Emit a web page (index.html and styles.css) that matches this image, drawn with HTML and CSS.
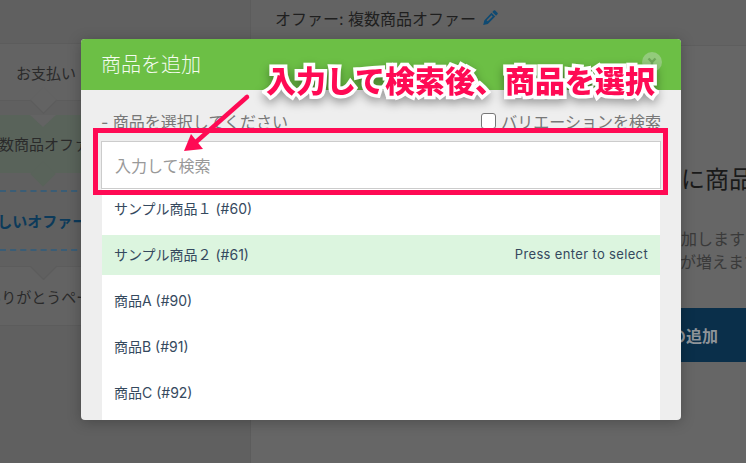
FILE: index.html
```html
<!DOCTYPE html>
<html lang="ja">
<head>
<meta charset="utf-8">
<title>商品を追加</title>
<link rel="stylesheet" href="styles.css">
</head>
<body>
<div class="page">
  <aside class="sidebar">
    <div class="step step-first"><span class="step-label">お支払い</span></div>
    <div class="step step-current"><span class="step-label step-label-wide">複数商品オファー</span></div>
    <div class="step-add"><span class="step-label step-label-wide">新しいオファー ＋</span></div>
    <div class="step step-last"><span class="step-label">ありがとうページ</span></div>
  </aside>
  <main class="main">
    <header class="topbar">
      <span>オファー: 複数商品オファー</span>
      <svg class="pencil" viewBox="0 0 14 14" aria-hidden="true"><path d="M10 .5a1 1 0 0 1 1.4 0l2.1 2.1a1 1 0 0 1 0 1.4l-1.3 1.3-3.5-3.5zM7.9 2.6l3.5 3.5-6.9 6.9-4.3 1 1-4.3zM8 5 3.4 9.6l1 1L9 6z" fill-rule="evenodd"/></svg>
    </header>
    <section class="content">
      <h2 class="content-title">こちらに商品を追加</h2>
      <p class="content-text content-text-first">オファーに商品を追加しますよ</p>
      <p class="content-text content-text-second">売上が増えます</p>
      <button class="add-button" type="button">商品の追加</button>
    </section>
  </main>

  <div class="modal">
    <div class="modal-head">
      <h1 class="modal-title">商品を追加</h1>
      <span class="modal-close"><svg viewBox="0 0 20 20" aria-hidden="true"><path d="M6.5 6.5 10 10l3.5-3.5M10 10v3.5"/></svg></span>
    </div>
    <div class="modal-body">
      <div class="modal-row">
        <span>- 商品を選択してください</span>
        <label class="variation"><span class="check"></span>バリエーションを検索</label>
      </div>
      <div class="search">入力して検索</div>
      <ul class="results">
        <li class="result">サンプル商品１ (#60)</li>
        <li class="result result-active"><span>サンプル商品２ (#61)</span><span class="hint">Press enter to select</span></li>
        <li class="result">商品A (#90)</li>
        <li class="result">商品B (#91)</li>
        <li class="result">商品C (#92)</li>
      </ul>
    </div>
  </div>

  <div class="callout-box"></div>
  <svg class="callout-arrow" viewBox="0 0 80 70" aria-hidden="true">
    <path class="arrow-line" d="M65 5 14 50"/>
    <path class="arrow-head" d="M2 59 9 42 21 57z"/>
  </svg>
  <div class="callout-text">入力して検索後、商品を選択</div>
</div>
</body>
</html>
```
FILE: styles.css
```css
* { box-sizing: border-box; }
html, body { margin: 0; height: 100%; }
body {
  font-family: Inter, "Noto Sans CJK JP", sans-serif;
  background: #666;
  overflow: hidden;
}
.page {
  position: relative;
  display: flex;
  width: 746px;
  height: 463px;
  overflow: hidden;
}

/* Sidebar */
.sidebar {
  width: 251px;
  flex: none;
  padding-top: 43px;
  background: #606060;
  border-right: 1px solid #5c5c5c;
  color: #2a2a2a;
  font-size: 15px;
}
.step-label {
  display: flex;
  justify-content: center;
  width: 92px;
  white-space: nowrap;
}
.step-label-wide { width: 88px; }
.step {
  position: relative;
  display: flex;
  align-items: center;
  height: 58px;
  background: #636363;
  border-top: 1px solid #5c5c5c;
  border-bottom: 1px solid #5c5c5c;
}
.step-first::after,
.step-current::after {
  content: "";
  position: absolute;
  left: 34px;
  width: 18px;
  height: 18px;
  bottom: -10px;
  transform: rotate(45deg);
  background: inherit;
  border-right: 1px solid #5c5c5c;
  border-bottom: 1px solid #5c5c5c;
}
.step-current {
  margin-top: 14px;
  padding-bottom: 2px;
  background: #59635a;
  border: 0;
}
.step-current::before {
  content: "";
  position: absolute;
  left: 30px;
  top: 0;
  width: 26px;
  height: 12px;
  background: #636363;
  clip-path: polygon(0 0, 100% 0, 50% 100%);
}
.step-current::after { border: 0; }
.step-add {
  display: flex;
  align-items: center;
  height: 61px;
  margin-top: 17px;
  border-top: 2px dashed #3a5d76;
  border-bottom: 2px dashed #3a5d76;
  color: #0c3a5a;
  font-weight: 700;
}
.step-last {
  margin-top: 15px;
  height: 60px;
}
.step-last::before {
  content: "";
  position: absolute;
  left: 34px;
  top: -10px;
  width: 18px;
  height: 18px;
  transform: rotate(45deg);
  background: #606060;
  border-right: 1px solid #5c5c5c;
  border-bottom: 1px solid #5c5c5c;
}

/* Main panel */
.main {
  flex: 1;
  min-width: 0;
  overflow: hidden;
}
.topbar {
  display: flex;
  align-items: center;
  gap: 7px;
  height: 46px;
  padding: 0 0 10px 24px;
  background: #636363;
  border-bottom: 1px solid #5e5e5e;
  color: #1f1f1f;
  font-size: 16px;
}
.pencil {
  width: 15px;
  height: 15px;
  fill: #0f4a72;
}
.content {
  padding: 117px 0 0 292px;
  width: 700px;
}
.content-title {
  margin: 0 0 0 66px;
  font-size: 24px;
  font-weight: 400;
  line-height: 34px;
  color: #1a1a1a;
  white-space: nowrap;
}
.content-text {
  margin: 0;
  color: #3a3a3a;
  font-size: 16px;
  line-height: 23px;
  white-space: nowrap;
}
.content-text-first { margin: 31px 0 0 -6px; }
.content-text-second { margin-left: 105px; }
.add-button {
  display: block;
  width: 200px;
  height: 54px;
  margin: 34px 0 0 35px;
  border: 0;
  background: #0a2f4a;
  color: #8f9499;
  font: 700 16px Inter, "Noto Sans CJK JP", sans-serif;
}

/* Modal */
.modal {
  position: absolute;
  left: 81px;
  top: 39px;
  width: 600px;
  height: 381px;
  border-radius: 4px;
  overflow: hidden;
  background: #eee;
  box-shadow: 0 2px 14px rgba(0, 0, 0, .25);
}
.modal-head {
  position: relative;
  height: 51px;
  padding: 0 20px 2px;
  display: flex;
  align-items: center;
  background: #6cbf45;
}
.modal-title {
  margin: 0;
  color: #f4fbf0;
  font-size: 20px;
  font-weight: 300;
}
.modal-close {
  position: absolute;
  left: 561px;
  top: 13px;
  width: 20px;
  height: 20px;
  border-radius: 50%;
  background: #93cb7c;
}
.modal-close svg {
  display: block;
  fill: none;
  stroke: #6fa85a;
  stroke-width: 2.4;
}
.modal-body { padding: 0 20px; }
.modal-row {
  display: flex;
  justify-content: space-between;
  align-items: center;
  height: 51px;
  padding-top: 10px;
  color: #777;
  font-size: 16px;
}
.variation {
  display: flex;
  align-items: center;
  gap: 5px;
}
.check {
  width: 15px;
  height: 16px;
  background: #fff;
  border: 1px solid #777;
  border-radius: 3px;
}
.search {
  display: flex;
  align-items: center;
  height: 48px;
  padding: 0 0 1px 13px;
  background: #fff;
  border: 1px solid #ccc;
  color: #999;
  font-size: 16px;
}
.results {
  display: flex;
  flex-direction: column;
  gap: 6px;
  height: 240px;
  margin: 0 1px;
  padding: 0;
  list-style: none;
  background: #fff;
  color: #35495e;
  font-size: 14px;
  border-radius: 0 0 5px 5px;
}
.result {
  display: flex;
  flex: none;
  align-items: center;
  justify-content: space-between;
  height: 40px;
  padding: 0 12px 2px;
}
.result-active { background: #dcf5df; }
.hint { font-size: 13px; letter-spacing: .35px; }

/* Annotation */
.callout-box {
  position: absolute;
  left: 93px;
  top: 128px;
  width: 575px;
  height: 67px;
  border: 5px solid #ff0a54;
}
.callout-arrow {
  position: absolute;
  left: 182px;
  top: 92px;
  width: 80px;
  height: 70px;
}
.arrow-line {
  fill: none;
  stroke: #ff0a54;
  stroke-width: 4.5;
  stroke-linecap: round;
}
.arrow-head { fill: #ff0a54; }
.callout-text {
  position: absolute;
  left: 266px;
  top: 57px;
  color: #ff0a54;
  font: 900 30px/44px "Noto Sans CJK JP", sans-serif;
  white-space: nowrap;
  -webkit-text-stroke: 7px #fff;
  paint-order: stroke fill;
  filter: drop-shadow(0 4px 5px rgba(0, 0, 0, .35));
}
```
